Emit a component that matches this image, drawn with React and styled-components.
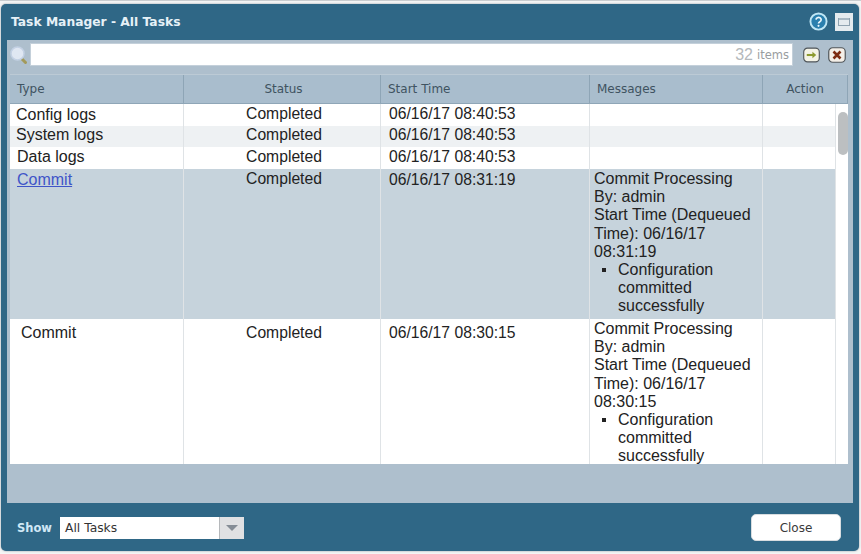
import React from 'react';
import styled, { createGlobalStyle } from 'styled-components';

const COLUMNS = '174px 197px 209px 173px 73px';
const SANS = '"DejaVu Sans", Verdana, sans-serif';
const ARIAL = '"Liberation Sans", Arial, sans-serif';

const GlobalStyle = createGlobalStyle`
  html, body {
    margin: 0;
    padding: 0;
    height: 100%;
    background: #f4f5f5;
    overflow: hidden;
  }
`;

const Page = styled.div`
  width: 861px;
  height: 554px;
  padding: 3px 2px 3px 1px;
  box-sizing: border-box;
  border-top: 1px solid #c9cdd0;
`;

const Dialog = styled.div`
  height: 100%;
  display: flex;
  flex-direction: column;
  background: #2f6786;
  border-radius: 5px;
  box-shadow: 0 0 2px rgba(60, 80, 95, 0.6);
`;

const TitleBar = styled.div`
  height: 35px;
  flex: none;
  display: flex;
  align-items: center;
  justify-content: space-between;
  padding: 0 6px 1px 10px;
`;

const Title = styled.h1`
  margin: 0;
  font: bold 12.3px ${SANS};
  color: #e6f1f7;
`;

const TitleIcons = styled.div`
  display: flex;
  align-items: center;
  gap: 7px;
`;

const Panel = styled.div`
  height: 463px;
  flex: none;
  margin: 0 6px 0 6px;
  padding: 0 5px 0 3px;
  background: #aebfcd;
  display: flex;
  flex-direction: column;
`;

const SearchBar = styled.div`
  height: 34px;
  flex: none;
  display: flex;
  align-items: flex-start;
  padding-top: 3px;
  box-sizing: border-box;
`;

const SearchIconSlot = styled.div`
  width: 20px;
  flex: none;
  display: flex;
  margin-top: 3px;
`;

const SearchField = styled.div`
  width: 763px;
  height: 23px;
  flex: none;
  display: flex;
  align-items: center;
  justify-content: flex-end;
  gap: 4px;
  padding-right: 3px;
  box-sizing: border-box;
  background: #fff;
  border: 1px solid #c4d0da;
`;

const ItemCount = styled.span`
  font: 16px ${ARIAL};
  color: #b4b8bb;
`;

const ItemLabel = styled.span`
  font: 11.5px ${SANS};
  color: #999da0;
`;

const SearchActions = styled.div`
  display: flex;
  gap: 8px;
  margin: 4px 0 0 10px;
`;

const HeaderRow = styled.div`
  height: 30px;
  flex: none;
  display: grid;
  grid-template-columns: 174px 197px 209px 173px 85px;
  background: #a9bdcd;
  border-top: 1px solid #bccad5;
  border-bottom: 1px solid #8fa6b7;
  box-sizing: border-box;
`;

const HeaderCell = styled.div`
  display: flex;
  align-items: center;
  justify-content: ${({ $center }) => ($center ? 'center' : 'flex-start')};
  padding-left: ${({ $pad }) => $pad}px;
  border-right: 1px solid #8ea5b6;
  font: 12px ${SANS};
  color: #3f5361;
`;

const TableBody = styled.div`
  height: 360px;
  flex: none;
  display: flex;
  overflow: hidden;
  background: #fff;
`;

const Rows = styled.div`
  width: 826px;
  flex: none;
`;

const Row = styled.div`
  height: ${({ $height }) => $height}px;
  display: grid;
  grid-template-columns: ${COLUMNS};
  overflow: hidden;
  background: ${({ $tone }) =>
    $tone === 'selected' ? '#c6d3dc' : $tone === 'alt' ? '#eef1f3' : '#fff'};
`;

const Cell = styled.div`
  font: 16px/18.2px ${ARIAL};
  color: #222;
  padding-top: ${({ $top }) => $top ?? 2}px;
  padding-left: ${({ $left }) => $left ?? 0}px;
  border-right: 1px solid #dfe3e6;
  box-sizing: border-box;
`;

const StatusCell = styled(Cell)`
  font-size: 15.7px;
  text-align: center;
  padding-left: 4px;
`;

const TimeCell = styled(Cell)`
  font-size: 15.7px;
  padding-left: 8px;
`;

const TaskLink = styled.a`
  color: #3f55c8;
  text-decoration: underline;
`;

const BulletList = styled.ul`
  margin: 0;
  padding: 0 0 0 ${({ $indent }) => $indent}px;
  list-style: none;
`;

const BulletItem = styled.li`
  position: relative;

  &::before {
    content: '';
    position: absolute;
    left: -16px;
    top: 7px;
    width: 4px;
    height: 4px;
    background: #222;
  }
`;

const ScrollTrack = styled.div`
  flex: 1;
  background: #fff;
  padding: 8px 0 0 2px;
`;

const ScrollThumb = styled.div`
  width: 10px;
  height: 43px;
  border-radius: 5px;
  background: #bcbfc1;
`;

const Footer = styled.div`
  flex: 1;
  display: flex;
  align-items: center;
  justify-content: space-between;
  padding: 1px 18px 0 16px;
`;

const ShowGroup = styled.div`
  display: flex;
  align-items: center;
  gap: 8px;
`;

const ShowLabel = styled.label`
  font: bold 11.5px ${SANS};
  color: #cfe7f5;
`;

const SelectBox = styled.div`
  width: 184px;
  height: 22px;
  display: flex;
  background: #fff;
  font: 12.3px ${SANS};
  color: #333;
`;

const SelectValue = styled.div`
  flex: 1;
  display: flex;
  align-items: center;
  padding-left: 5px;
`;

const SelectArrow = styled.div`
  width: 25px;
  flex: none;
  display: flex;
  align-items: center;
  justify-content: center;
  background: #e0e1e3;
  border-left: 1px solid #b5b8bb;
  box-sizing: border-box;

  &::after {
    content: '';
    border-left: 6px solid transparent;
    border-right: 6px solid transparent;
    border-top: 6px solid #858d96;
  }
`;

const CloseButton = styled.button`
  width: 90px;
  height: 27px;
  padding: 0;
  border: 1px solid #d8dde0;
  border-radius: 5px;
  background: #fff;
  font: 12px ${SANS};
  color: #3a3a3a;
`;

const HelpIcon = () => (
  <svg width="19" height="19" viewBox="0 0 20 20">
    <circle cx="10" cy="10" r="8.5" fill="#2a7fae" stroke="#bfe6f5" strokeWidth="2" />
    <path d="M7.4 8a2.7 2.4 0 1 1 4 2.2c-1 .6-1.4 1-1.4 2" fill="none" stroke="#eaf6fb" strokeWidth="1.8" />
    <circle cx="10" cy="14.6" r="1.1" fill="#eaf6fb" />
  </svg>
);

const MaximizeIcon = () => (
  <svg width="18" height="18" viewBox="0 0 18 18">
    <rect width="18" height="18" fill="#e4ebef" />
    <rect x="3.5" y="5.5" width="11" height="7" fill="none" stroke="#8fa3b1" />
    <rect x="4" y="5" width="10" height="2" fill="#a9b9c4" />
  </svg>
);

const MagnifierIcon = () => (
  <svg width="18" height="20" viewBox="0 0 18 20">
    <path d="M11 12l4.5 4.5" stroke="#a39a5a" strokeWidth="3" strokeLinecap="round" />
    <circle cx="7.5" cy="7.5" r="6.5" fill="#dfe7f2" stroke="#c3d1e4" strokeWidth="1.5" />
  </svg>
);

const GoIcon = () => (
  <svg width="17" height="16" viewBox="0 0 18 16">
    <rect x=".75" y=".75" width="16.5" height="14.5" rx="4" fill="#f4f3e6" stroke="#50565a" strokeWidth="1.2" />
    <path d="M4 8h8" stroke="#8d9a2e" strokeWidth="2.2" />
    <path d="M10 4.5L14 8l-4 3.5z" fill="#8d9a2e" />
  </svg>
);

const ClearIcon = () => (
  <svg width="18" height="16" viewBox="0 0 18 16">
    <rect x=".75" y=".75" width="16.5" height="14.5" rx="4" fill="#f4efe8" stroke="#50565a" strokeWidth="1.2" />
    <path d="M5.5 4.5l7 7M12.5 4.5l-7 7" stroke="#7c2c12" strokeWidth="2.6" />
  </svg>
);

const COLUMN_HEADERS = [
  { label: 'Type', pad: 7 },
  { label: 'Status', center: true, pad: 3 },
  { label: 'Start Time', pad: 7 },
  { label: 'Messages', pad: 7 },
  { label: 'Action', center: true, pad: 0 },
];

const LOG_ROWS = [
  { name: 'Config logs', height: 22, tone: 'plain', left: 6, top: 2, statusTop: 1 },
  { name: 'System logs', height: 21, tone: 'alt', left: 6, top: 0, statusTop: 0 },
  { name: 'Data logs', height: 22, tone: 'plain', left: 7, top: 1, statusTop: 1 },
];

const CommitRow = ({ height, tone, time, link, left, typeTop, statusTop, timeTop }) => (
  <Row $height={height} $tone={tone}>
    <Cell $left={left} $top={typeTop}>
      {link ? <TaskLink>Commit</TaskLink> : 'Commit'}
    </Cell>
    <StatusCell $top={statusTop}>Completed</StatusCell>
    <TimeCell $top={timeTop}>06/16/17 {time}</TimeCell>
    <Cell $left={4} $top={1}>
      Commit Processing
      <br />
      By: admin
      <br />
      Start Time (Dequeued Time): 06/16/17 {time}
      <BulletList $indent={24}>
        <BulletItem>Configuration committed successfully</BulletItem>
      </BulletList>
    </Cell>
    <Cell />
  </Row>
);

export default function App() {
  return (
    <>
      <GlobalStyle />
      <Page>
        <Dialog>
          <TitleBar>
            <Title>Task Manager - All Tasks</Title>
            <TitleIcons>
              <HelpIcon />
              <MaximizeIcon />
            </TitleIcons>
          </TitleBar>
          <Panel>
            <SearchBar>
              <SearchIconSlot>
                <MagnifierIcon />
              </SearchIconSlot>
              <SearchField>
                <ItemCount>32</ItemCount>
                <ItemLabel>items</ItemLabel>
              </SearchField>
              <SearchActions>
                <GoIcon />
                <ClearIcon />
              </SearchActions>
            </SearchBar>
            <HeaderRow>
              {COLUMN_HEADERS.map(({ label, center, pad }) => (
                <HeaderCell key={label} $center={center} $pad={pad}>
                  {label}
                </HeaderCell>
              ))}
            </HeaderRow>
            <TableBody>
              <Rows>
                {LOG_ROWS.map(({ name, height, tone, left, top, statusTop }) => (
                  <Row key={name} $height={height} $tone={tone}>
                    <Cell $left={left} $top={top}>{name}</Cell>
                    <StatusCell $top={statusTop}>Completed</StatusCell>
                    <TimeCell $top={statusTop}>06/16/17 08:40:53</TimeCell>
                    <Cell />
                    <Cell />
                  </Row>
                ))}
                <CommitRow height={150} tone="selected" time="08:31:19" link left={7} typeTop={2} statusTop={1} timeTop={2} />
                <CommitRow height={145} tone="plain" time="08:30:15" left={11} typeTop={5} statusTop={5} timeTop={5} />
              </Rows>
              <ScrollTrack>
                <ScrollThumb />
              </ScrollTrack>
            </TableBody>
          </Panel>
          <Footer>
            <ShowGroup>
              <ShowLabel>Show</ShowLabel>
              <SelectBox>
                <SelectValue>All Tasks</SelectValue>
                <SelectArrow />
              </SelectBox>
            </ShowGroup>
            <CloseButton>Close</CloseButton>
          </Footer>
        </Dialog>
      </Page>
    </>
  );
}
